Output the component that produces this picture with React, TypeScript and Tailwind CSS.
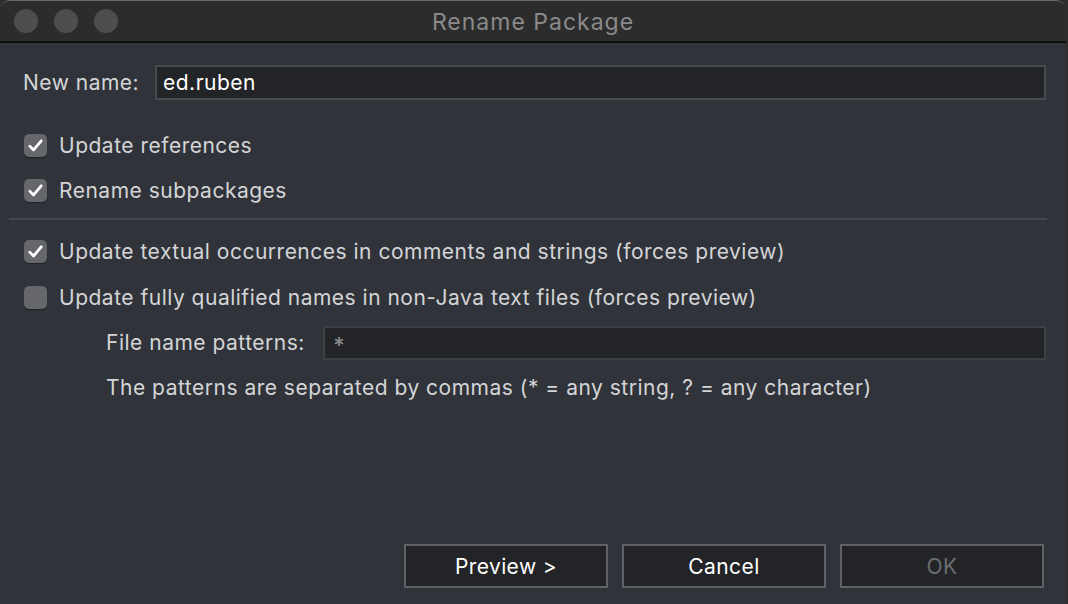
import React from "react";

const font = { fontFamily: "Inter, 'Noto Sans', sans-serif" };

const Check = ({ checked }: { checked: boolean }) => (
  <div className="w-[23px] h-[23px] rounded-[5px] bg-[#65676b] flex items-center justify-center shrink-0 shadow-[0_1px_1px_rgba(0,0,0,0.4)]">
    {checked && (
      <svg width="17" height="17" viewBox="0 0 16 16">
        <path d="M2.6 8.6 L6.2 12.2 L13.4 3.6" fill="none" stroke="#ffffff" strokeWidth="2.6" strokeLinecap="round" strokeLinejoin="round" />
      </svg>
    )}
  </div>
);

const Option = ({ label, checked }: { label: string; checked: boolean }) => (
  <div className="flex items-center gap-[12px] pl-[24px] h-[24px]">
    <Check checked={checked} />
    <span className="text-[21px] tracking-[0.5px] text-[#d4d5d7] leading-none">{label}</span>
  </div>
);

const Button = ({ label, disabled }: { label: string; disabled?: boolean }) => (
  <div
    className={
      "w-[204px] h-[44px] border-2 border-[#5e6063] bg-[#222427] flex items-center justify-center pt-[1px] text-[21px] tracking-[0.4px] " +
      (disabled ? "text-[#6c6e71]" : "text-white")
    }
  >
    {label}
  </div>
);

export default function App() {
  return (
    <div className="w-[1068px] h-[604px] bg-[#2d2d2d] overflow-hidden" style={font}>
      <div className="w-[1066px] h-[604px] rounded-t-[10px] overflow-hidden flex flex-col bg-[#30333a] border-t border-[#6a6a6a]">
        <div className="h-[42px] bg-[#2c2c2c] border-b-2 border-[#0e0e0e] flex items-center relative shrink-0">
          <div className="flex gap-[16px] pl-[14px]">
            <div className="w-[24px] h-[24px] rounded-full bg-[#4e4e4e]" />
            <div className="w-[24px] h-[24px] rounded-full bg-[#4e4e4e]" />
            <div className="w-[24px] h-[24px] rounded-full bg-[#4e4e4e]" />
          </div>
          <div className="absolute inset-0 flex items-center justify-center pt-[3px] text-[23px] tracking-[1px] text-[#8a8a8a]">
            Rename Package
          </div>
        </div>

        <div className="flex flex-col flex-1">
          <div className="flex items-center mt-[22px] pl-[23px] pr-[20px]">
            <span className="text-[21px] tracking-[0.5px] text-[#d4d5d7] w-[132px]">New name:</span>
            <div className="flex-1 h-[35px] border-2 border-[#474a4f] bg-[#222427] flex items-center pl-[6px] text-[21px] tracking-[0.5px] text-white">
              ed.ruben
            </div>
          </div>

          <div className="mt-[33px]">
            <Option label="Update references" checked />
          </div>
          <div className="mt-[21px]">
            <Option label="Rename subpackages" checked />
          </div>

          <div className="mt-[16px] mx-[9px] mr-[19px] h-[2px] bg-[#44474c]" />

          <div className="mt-[19px]">
            <Option label="Update textual occurrences in comments and strings (forces preview)" checked />
          </div>
          <div className="mt-[22px]">
            <Option label="Update fully qualified names in non-Java text files (forces preview)" checked={false} />
          </div>

          <div className="flex items-center mt-[17px] pl-[106px] pr-[20px]">
            <span className="text-[21px] tracking-[0.5px] text-[#d4d5d7] w-[217px]">File name patterns:</span>
            <div className="flex-1 h-[34px] border-2 border-[#3c3f44] bg-[#222427] flex items-center pl-[8px] pt-[4px] text-[22px] font-semibold text-[#86888b]">
              *
            </div>
          </div>

          <div className="mt-[12px] pl-[106px] text-[21px] tracking-[0.5px] text-[#d4d5d7]">
            The patterns are separated by commas (* = any string, ? = any character)
          </div>

          <div className="mt-auto mb-[16px] flex justify-end gap-[14px] pr-[22px]">
            <Button label="Preview >" />
            <Button label="Cancel" />
            <Button label="OK" disabled />
          </div>
        </div>
      </div>
    </div>
  );
}
